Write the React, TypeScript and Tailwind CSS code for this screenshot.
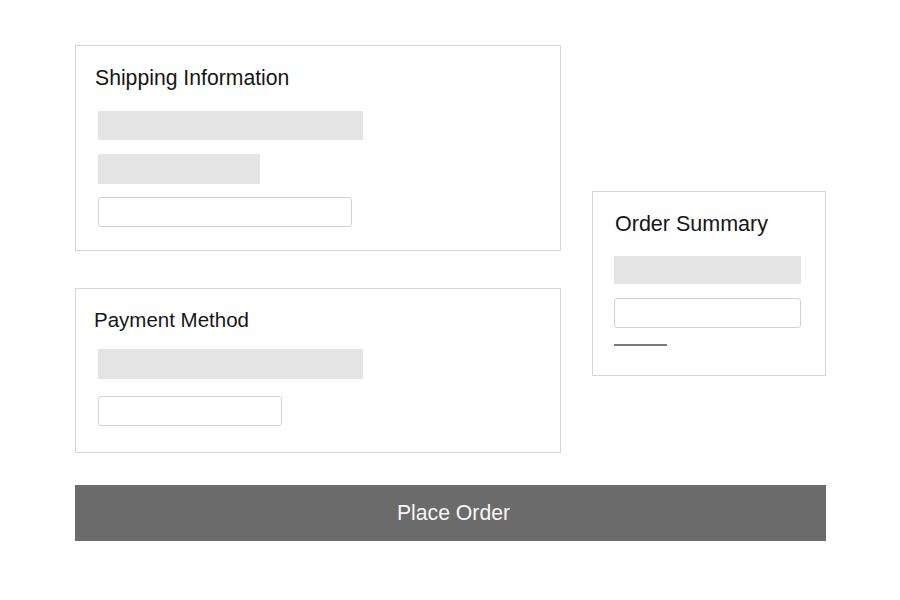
import React from "react";

const font = { fontFamily: '"Liberation Sans", Arial, sans-serif' };

export default function App() {
  return (
    <div className="w-[900px] h-[600px] bg-white overflow-hidden" style={font}>
      <div className="pt-[45px] pl-[75px] w-[826px]">
        <div className="flex items-start gap-[31px]">
          <div className="flex flex-col w-[486px]">
            {/* Shipping */}
            <div className="border border-[#d6d6d6] h-[206px] pt-[20px] pl-[22px]">
              <div className="text-[21.2px] leading-[24px] text-[#161616] -ml-[3px]">Shipping Information</div>
              <div className="mt-[21px] w-[265px] h-[29px] bg-[#e4e4e4]" />
              <div className="mt-[14px] w-[162px] h-[30px] bg-[#e4e4e4]" />
              <div className="mt-[13px] w-[254px] h-[30px] border border-[#d2d2d2] rounded-[3px] bg-white" />
            </div>
            {/* Payment */}
            <div className="mt-[37px] border border-[#d6d6d6] h-[165px] pt-[19px] pl-[22px]">
              <div className="text-[20.5px] leading-[24px] text-[#161616] -ml-[4px]">Payment Method</div>
              <div className="mt-[17px] w-[265px] h-[30px] bg-[#e4e4e4]" />
              <div className="mt-[17px] w-[184px] h-[30px] border border-[#d2d2d2] rounded-[3px] bg-white" />
            </div>
          </div>
          {/* Order Summary */}
          <div className="mt-[146px] w-[234px] h-[185px] border border-[#d6d6d6] pt-[20px] pl-[21px]">
            <div className="text-[21.5px] leading-[24px] text-[#161616] ml-[1px]">Order Summary</div>
            <div className="mt-[20px] w-[187px] h-[28px] bg-[#e4e4e4]" />
            <div className="mt-[14px] w-[187px] h-[30px] border border-[#d2d2d2] rounded-[3px] bg-white" />
            <div className="mt-[16px] w-[53px] h-[1.5px] bg-[#7a7a7a]" />
          </div>
        </div>
        <div className="mt-[32px] w-[751px] h-[56px] bg-[#6b6b6b] flex items-center justify-center pl-[6px]">
          <span className="text-[21.2px] text-[#f6f6f6] leading-[24px]">Place Order</span>
        </div>
      </div>
    </div>
  );
}
